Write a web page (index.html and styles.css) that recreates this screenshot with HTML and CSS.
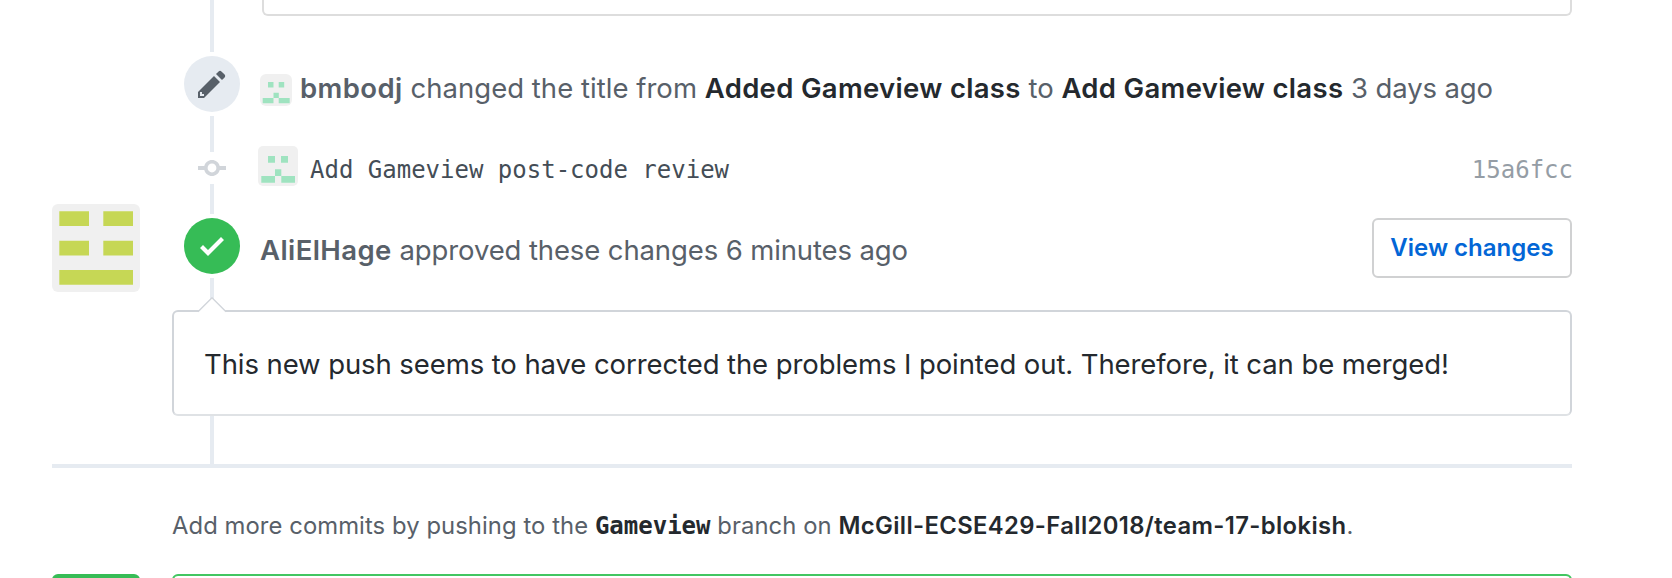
FILE: index.html
```html
<!DOCTYPE html>
<html lang="en">
<head>
<meta charset="utf-8">
<title>Pull request timeline</title>
<link rel="stylesheet" href="styles.css">
</head>
<body>
<main class="page">
  <div class="row row-top">
    <div class="rail"><span class="line"></span></div>
    <div class="diff-box"></div>
  </div>

  <div class="row row-badge">
    <div class="rail">
      <span class="badge"><svg class="icon" width="28" height="32" viewBox="0 0 14 16"><path d="M0 12v3h3l8-8-3-3-8 8zm3 2H1v-2h1v1h1v1zm10.3-9.3L12 6 9 3l1.3-1.3a.996.996 0 0 1 1.41 0l1.59 1.59c.39.39.39 1.02 0 1.41z"/></svg></span>
    </div>
    <div class="event">
      <svg class="avatar-sm" width="32" height="32" viewBox="0 0 32 32"><rect width="32" height="32" rx="6" fill="#f0f0f0"/><path fill="#9fe3c0" d="M8 8h5.500v5.500H8zM18.700 8h5.500v5.500h-5.500zM13.500 18.700h5.300V24h-5.300zM2.700 24h10.800v5.300H2.700zM18.700 24h11v5.300h-11z"/></svg>
      <p class="text"><b class="author">bmbodj</b> <span class="action">changed the title from</span> <b class="title">Added Gameview class</b> to <b class="title">Add Gameview class</b> <span class="time">3 days ago</span></p>
    </div>
  </div>

  <div class="row row-gap36"><div class="rail"><span class="line"></span></div></div>

  <div class="row row-commit">
    <div class="rail"><svg class="icon-commit" width="28" height="32" viewBox="0 0 14 16"><path d="M10.860 7c-.45-1.720-2-3-3.860-3-1.860 0-3.410 1.280-3.860 3H0v2h3.140c.45 1.720 2 3 3.860 3 1.860 0 3.410-1.280 3.860-3H14V7h-3.140zM7 10.200c-1.220 0-2.200-.98-2.200-2.200 0-1.220.98-2.200 2.200-2.200 1.220 0 2.200.98 2.200 2.200 0 1.220-.98 2.200-2.200 2.200z"/></svg></div>
    <div class="commit">
      <svg class="avatar-md" width="40" height="40" viewBox="0 0 40 40"><rect width="40" height="40" rx="5" fill="#f0f0f0"/><path fill="#9fe3c0" d="M10 10h7v6.700h-7zM23 10h7v6.700h-7zM17 23.300h6.300V30H17zM3.300 30H17v6.700H3.300zM23.300 30H37v6.700H23.300z"/></svg>
      <code class="message">Add Gameview post-code review</code>
      <code class="sha">15a6fcc</code>
    </div>
  </div>

  <div class="row row-gap30"><div class="rail"><span class="line"></span></div></div>

  <div class="row row-badge row-review">
    <svg class="avatar-lg" width="88" height="88" viewBox="0 0 88 88"><rect width="88" height="88" rx="6" fill="#f0f0f0"/><path fill="#c6d755" d="M7.300 7.300H37v14.700H7.300zM51.300 7.300H81v14.700H51.300zM7.300 36.700H37v14.700H7.300zM51.300 36.700H81v14.700H51.300zM7.300 66H81v14.700H7.300z"/></svg>
    <div class="rail">
      <span class="badge badge-ok"><svg class="icon" width="24" height="32" viewBox="0 0 12 16"><path d="M12 5l-8 8-4-4 1.500-1.500L4 10l6.500-6.500L12 5z"/></svg></span>
    </div>
    <div class="event">
      <p class="text"><b class="author">AliElHage</b> <span class="time">approved these changes 6 minutes ago</span></p>
      <a class="button">View changes</a>
    </div>
  </div>

  <div class="row row-gap32"><div class="rail"><span class="line"></span></div></div>

  <div class="comment">
    <svg class="caret" width="28" height="17" viewBox="0 0 28 17"><path d="M0 17V15L14 1 28 15V17z" fill="#fff"/><path d="M0 14.800L14 .8 28 14.800" fill="none" stroke="#d1d5da" stroke-width="1.400"/></svg>
    <p class="comment-text">This new push seems to have corrected the problems I pointed out. Therefore, it can be merged!</p>
  </div>

  <div class="row row-gap48"><div class="rail"><span class="line"></span></div></div>
  <hr class="divider">

  <p class="hint">Add more commits by pushing to the <code class="branch">Gameview</code> branch on <b class="repo">McGill-ECSE429-Fall2018/team-17-blokish</b>.</p>

  <div class="merge">
    <div class="merge-icon"></div>
    <div class="merge-box"></div>
  </div>
</main>
</body>
</html>
```
FILE: styles.css
```css
* { box-sizing: border-box; }

body {
  margin: 0;
  background: #fff;
  color: #586069;
  font-family: Inter, "Liberation Sans", sans-serif;
}

p { margin: 0; }
b { font-weight: 600; }

.page {
  width: 1672px;
  height: 578px;
  padding: 0 100px 0 52px;
  overflow: hidden;
}

.row {
  display: flex;
  padding-left: 132px;
}

.rail {
  display: flex;
  flex: none;
  justify-content: center;
  align-items: center;
  width: 56px;
  margin-right: 20px;
}

.line {
  align-self: stretch;
  width: 4px;
  background: #e6ebf1;
}

.row-top { height: 52px; }
.row-badge { height: 64px; align-items: center; }
.row-commit { height: 32px; align-items: center; }
.row-gap30 { height: 30px; }
.row-gap32 { height: 32px; }
.row-gap36 { height: 36px; }
.row-gap48 { height: 48px; }

.diff-box {
  flex: 1;
  height: 16px;
  margin-left: 2px;
  border: 2px solid #ddd;
  border-top: 0;
  border-radius: 0 0 6px 6px;
}

.badge {
  display: flex;
  align-items: center;
  justify-content: center;
  width: 56px;
  height: 56px;
  border-radius: 50%;
  background: #e6ebf1;
  fill: #586069;
}

.badge-ok {
  background: #36bc56;
  fill: #fff;
}

.icon-commit { fill: #d1d5da; }

.event {
  display: flex;
  flex: 1;
  align-items: center;
}

.avatar-sm { flex: none; margin: 12px 8px 0 0; }

.text {
  padding-top: 8px;
  font-size: 27.5px;
  line-height: 36px;
  white-space: nowrap;
}

.author { letter-spacing: 0.42px; }
.action { letter-spacing: 0.03px; }
.title { color: #24292e; letter-spacing: 0.32px; }
.time { letter-spacing: -0.12px; }

.commit {
  display: flex;
  flex: 1;
  align-items: center;
  margin: -4px -1px -4px -2px;
}

.avatar-md { margin: -4px 12px 0 0; }

code { font-family: "DejaVu Sans Mono", monospace; font-size: 24px; }
.message { padding-top: 4px; color: #444d56; }
.sha { margin-left: auto; padding-top: 4px; color: #959da5; }

.row-review { padding-left: 0; }
.avatar-lg { flex: none; margin: -10px 44px -14px 0; }

.button {
  width: 200px;
  height: 60px;
  margin: 0 0 -4px auto;
  border: 2px solid #d0d1d2;
  border-radius: 6px;
  color: #0366d6;
  font-size: 24px;
  font-weight: 600;
  line-height: 56px;
  text-align: center;
  white-space: nowrap;
}

.comment {
  position: relative;
  height: 106px;
  margin-left: 120px;
  padding: 32px 30px;
  border: 2px solid #d1d5da;
  border-bottom-color: #dfe2e5;
  border-radius: 6px;
  color: #24292e;
}

.caret {
  position: absolute;
  top: -15px;
  left: 24px;
}

.comment-text {
  font-size: 27.5px;
  line-height: 40px;
  letter-spacing: -0.088px;
  white-space: nowrap;
}

.divider {
  height: 4px;
  margin: 0;
  border: 0;
  background: #e6ebf1;
}

.hint {
  height: 106px;
  padding: 40px 0 0 120px;
  font-size: 23.8px;
  line-height: 36px;
  letter-spacing: 0.08px;
  white-space: nowrap;
}

.branch { color: #24292e; font-weight: 700; letter-spacing: 0; }
.repo { color: #24292e; letter-spacing: 0.38px; }

.merge { display: flex; gap: 32px; height: 60px; }
.merge-icon { width: 88px; border-radius: 6px; background: #36bc56; }
.merge-box { flex: 1; border: 2px solid #42c661; border-radius: 6px; }
```
